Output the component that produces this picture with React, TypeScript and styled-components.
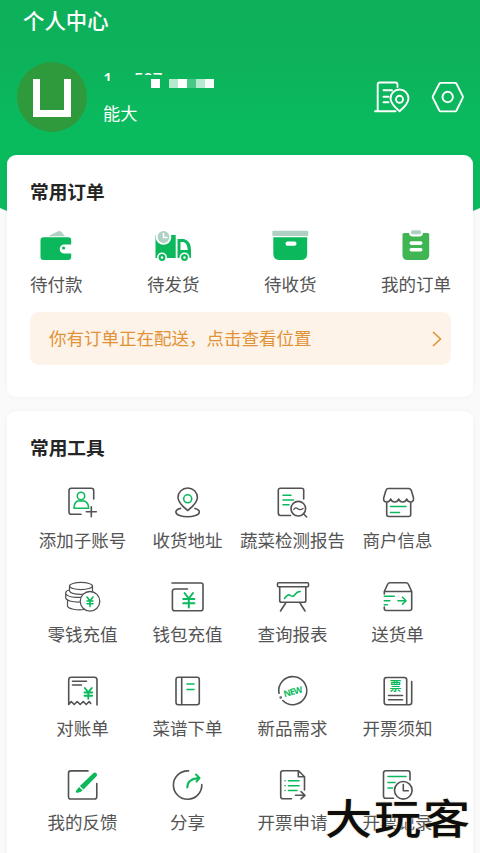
import React from "react";
import styled, { createGlobalStyle } from "styled-components";

const GREEN = "#0bb95c";
const INK = "#525252";

const GlobalStyle = createGlobalStyle`
  * { box-sizing: border-box; }
  html, body { margin: 0; padding: 0; }
  body {
    background: #fafafa;
    font-family: "Noto Sans CJK SC", "Noto Sans", sans-serif;
    overflow: hidden;
  }
`;

const Page = styled.div`
  position: relative;
  width: 480px;
  height: 853px;
  overflow: hidden;
  background: #fafafa;
`;

const Header = styled.header`
  height: 230px;
  margin-bottom: -75px;
  padding: 5px 12px 0 17px;
  color: #fff;
  background: linear-gradient(#0eb05a 0, #0db25b 60px, #0abb5e 130px, #0abb5e 100%);
  clip-path: polygon(0 0, 480px 0, 480px 208px, 473px 211px, 430px 229px, 50px 229px, 7px 211px, 0 208px);
`;

const PageTitle = styled.h1`
  margin: 0 0 0 6px;
  font-size: 21.4px;
  line-height: 30px;
  font-weight: 500;
`;

const Profile = styled.div`
  display: flex;
  align-items: flex-start;
  margin-top: 27px;
`;

const Avatar = styled.div`
  display: flex;
  width: 70px;
  height: 70px;
  padding: 17px 16px 15px;
  border-radius: 50%;
  background: #2e9a3b;
`;

const AvatarMark = styled.div`
  flex: 1;
  border: 7px solid #fff;
  border-top: 0;
`;

const User = styled.div`
  flex: 1;
  padding: 10px 0 0 16px;
`;

const Phone = styled.div`
  display: flex;
  align-items: flex-start;
  height: 29px;
  font-size: 17px;
`;

const DigitSlice = styled.span<{ $w: number; $h: number }>`
  width: ${(p) => p.$w}px;
  height: ${(p) => p.$h}px;
  margin-right: ${(p) => (p.$w < 20 ? 21 : 0)}px;
  overflow: hidden;
  line-height: 14px;
  font-family: "Noto Sans", sans-serif;
  font-weight: 500;
  letter-spacing: -0.4px;
`;

const Mosaic = styled.span`
  display: flex;
  margin: 7px 0 0 -12px;
`;

const Tile = styled.i<{ $a: number; $gap?: number }>`
  width: 9px;
  height: 9px;
  margin-right: ${(p) => p.$gap || 0}px;
  background: rgba(255, 255, 255, ${(p) => p.$a});
`;

const Nick = styled.div`
  font-size: 17.2px;
  line-height: 24px;
`;

const HeaderActions = styled.div`
  display: flex;
  gap: 16px;
  padding-top: 17px;
`;

const Card = styled.section<{ $h: number }>`
  position: relative;
  height: ${(p) => p.$h}px;
  margin: 0 7px 14px;
  padding: 22px 22px 0 23px;
  background: #fff;
  border-radius: 9px;
  box-shadow: 0 0 7px rgba(0, 0, 0, 0.035);
`;

const CardTitle = styled.h2`
  margin: 0;
  font-size: 18.7px;
  line-height: 28px;
  font-weight: 700;
  color: #252525;
`;

const Orders = styled.div`
  display: flex;
  justify-content: space-between;
  margin-top: 23px;
`;

const Entry = styled.div`
  display: flex;
  flex-direction: column;
  align-items: center;
`;

const Label = styled.span`
  margin-top: 8px;
  font-size: 17.5px;
  line-height: 24px;
  white-space: nowrap;
  color: #545454;
`;

const Notice = styled.div`
  display: flex;
  align-items: center;
  justify-content: space-between;
  height: 53px;
  margin-top: 16px;
  padding: 0 8px 2px 19px;
  border-radius: 9px;
  background: #fdf3e9;
  font-size: 17.5px;
  color: #e29236;
`;

const Tools = styled.div`
  display: grid;
  grid-template-columns: repeat(4, 105px);
  grid-auto-rows: 94px;
  margin-top: 23px;
`;

const Drawing = styled.svg`
  display: block;
  width: 40px;
  height: 36px;
  fill: none;
  stroke: ${INK};
  stroke-width: 1.6;
  stroke-linecap: round;
  stroke-linejoin: round;
  .g { stroke: ${GREEN}; }
  .f { fill: ${GREEN}; stroke: none; }
  .m { fill: #afd0c2; stroke: none; }
  .w { fill: #fff; stroke: none; }
  .o { stroke: #fff; stroke-width: 1.9; }
  text { fill: ${GREEN}; stroke: none; }
`;

const Chevron = styled.svg`
  width: 12px;
  height: 18px;
  margin-top: 2px;
  fill: none;
  stroke: #e29236;
  stroke-width: 1.6;
`;

const Watermark = styled.div`
  position: absolute;
  left: 325px;
  top: 786px;
  font-size: 47px;
  line-height: 60px;
  letter-spacing: 2px;
  color: #0d0d0d;
  font-weight: 500;
  white-space: nowrap;
  transform: scaleY(0.88);
  text-shadow: 0 0 2px #e9dfc0, 0 0 2px #e9dfc0;
`;

type Item = { label: string; art: React.ReactNode };

const orders: Item[] = [
  {
    label: "待付款",
    art: (
      <>
        <path className="m" d="M12 8.3 21.5 3.6Q24 2 25.6 4.2L29 8.3Z" />
        <path className="f" d="M7.5 9.3h24.7q3 0 3 3v4.2h-7a4.5 4.5 0 0 0 0 9h7V29q0 3-3 3H7.5q-3 0-3-3V12.3q0-3 3-3Z" />
        <circle className="f" cx="27.6" cy="20" r="1.6" />
      </>
    ),
  },
  {
    label: "待发货",
    art: (
      <>
        <path className="f" d="M2.5 8q0-1 1-1H22.7V30H2.5ZM24.5 11h6.5q7 2 7 11v8H24.5Z" />
        <path className="w" d="M27.5 14h3q4 1.500 4.300 8h-7.300Z" />
        <circle className="w" cx="10.5" cy="9" r="7.8" />
        <circle className="m" cx="10.5" cy="9" r="5.9" />
        <path d="M10.5 5.500v4h3.500" stroke="#fff" />
        <circle className="w" cx="9" cy="29.5" r="5" />
        <circle className="f" cx="9" cy="29.5" r="3.4" />
        <circle className="w" cx="31.5" cy="29.5" r="5" />
        <circle className="f" cx="31.5" cy="29.5" r="3.4" />
        <circle className="w" cx="9" cy="29.5" r="1.2" />
        <circle className="w" cx="31.5" cy="29.5" r="1.2" />
      </>
    ),
  },
  {
    label: "待收货",
    art: (
      <>
        <rect className="m" x="2.3" y="2.8" width="36" height="5.2" rx="1" />
        <path className="f" d="M3.300 9.300h33.900v16.200q0 6.500-6.500 6.500H9.800q-6.500 0-6.500-6.500Z" />
        <rect className="w" x="15.500" y="13.500" width="11" height="4.200" rx="2" />
      </>
    ),
  },
  {
    label: "我的订单",
    art: (
      <>
        <path d="M8 5h23.700q1.500 0 1.500 1.500v20.500q0 5-5 5H11.500q-5 0-5-5V6.500Q6.500 5 8 5Z" fill="#3fb653" stroke="none" />
        <path className="w" d="M13 4.500h14q0 4-3.500 4h-7q-3.500 0-3.500-4Z" />
        <rect className="m" x="15" y="2.200" width="10" height="4" rx="1.500" />
        <rect className="w" x="13.500" y="13.300" width="13" height="3.600" rx="1.800" />
        <rect className="w" x="13.500" y="19.900" width="13" height="3.600" rx="1.800" />
      </>
    ),
  },
];

const tools: Item[] = [
  {
    label: "添加子账号",
    art: (
      <>
        <path d="M30.700 15V6.500q0-2.300-2.300-2.300H8.300Q6 4.200 6 6.500V28q0 2.300 2.300 2.300H18M28.300 22.700v10M23.300 27.700h10" />
        <circle className="g" cx="18" cy="12" r="3.700" />
        <path className="g" d="M14.500 17h7q4 1.500 4.200 7.300H11Q11.200 18.500 14.500 17Z" />
      </>
    ),
  },
  {
    label: "收货地址",
    art: (
      <>
        <path d="M19.700 26.500Q10 19 10 13.500a9.700 9.500 0 0 1 19.400 0Q29.400 19 19.700 26.500Z" />
        <circle className="g" cx="19.700" cy="14.800" r="4" />
        <path d="M12.500 24.400C6 26 7 30 11.500 31.500Q19.500 34 27.500 31.500C32.500 30 33 26 27 24.400" />
      </>
    ),
  },
  {
    label: "蔬菜检测报告",
    art: (
      <>
        <path d="M30.700 15V6.300Q30.700 4.200 28.500 4.200h-21Q5.300 4.200 5.300 6.300V29q0 2.500 2.300 2.500H17.500" />
        <path className="g" d="M10 11.300h8M10 16h10.500M10 20.700h6" />
        <circle cx="25.300" cy="24.700" r="7.300" />
        <path d="M30.700 30 33.700 33" />
        <path strokeWidth="1.200" d="M20.700 25.500q2-2.700 4-.8t5.500-.2" style={{}} />
      </>
    ),
  },
  {
    label: "商户信息",
    art: (
      <>
        <path d="M8.700 18V30.500q0 2 2 2h20q2 0 2-2V18M10 4.500h20.700q2 0 2.800 2.500l2 7q.3 4-2.800 4-3.200 0-4-3-1 3-4 3t-4-3q-1 3-4 3t-4-3q-1 3-4 3-3.500 0-3-4l2-7q.800-2.500 2.300-2.500Z" />
        <path className="g" d="M12.500 22.500h15.500M12.500 28.500h9" />
      </>
    ),
  },
  {
    label: "零钱充值",
    art: (
      <>
        <ellipse cx="18" cy="8" rx="11.500" ry="3.600" strokeWidth="1.200" />
        <path
          strokeWidth="1.200"
          d="M6.500 8v5c2 4.500 21 4.500 23 0V8M6 12q-3.500 1-3.300 3v5c1 3 8 4.300 14 4M3 16c3 4 16 4.500 19 1.500M4.500 22v6c1 3 9 4.500 17 3.500"
        />
        <circle className="w" cx="27" cy="23.300" r="10" />
        <circle cx="27" cy="23.300" r="9.800" strokeWidth="1.300" />
        <path className="g" d="m24 19 3 4 3-4M27 23v5.500M24 23h6M24 25.700h6" />
      </>
    ),
  },
  {
    label: "钱包充值",
    art: (
      <>
        <path d="M4 5h29q2 0 2 2v23.500q0 2.300-2.300 2.300h-26q-2.300 0-2.300-2.300V13.500Q4.400 11 7 11h12.500" />
        <path className="g" d="m16.500 15 4.300 5.500L25 15M20.800 20.500v9M15.200 21h11.200M15.200 25.200h11.200" strokeWidth="2" />
      </>
    ),
  },
  {
    label: "查询报表",
    art: (
      <>
        <rect x="4.500" y="4.700" width="31" height="4" rx="1" />
        <path d="M6.700 9v13.500q0 1.800 1.800 1.800H31q1.800 0 1.800-1.800V9M12.700 25 7.500 33M27 25l5 8" />
        <path className="g" d="M11.500 20.500q3.500-5 6-3t4.500-1 5.300-3" />
      </>
    ),
  },
  {
    label: "送货单",
    art: (
      <>
        <path d="M6.300 16v-2.500L9.500 6.500q.8-1.800 2.500-1.800h16q1.700 0 2.500 1.800l3.200 7v17q0 2-2 2H8.300q-2 0-2-2V29M6.300 13.500h27.400" />
        <path className="g" d="M6.300 18.300h10M6.300 22.700h5.500M6.300 26.700h3M20 22.700h7.500M24.500 19.200 28 22.700l-3.500 3.500" />
      </>
    ),
  },
  {
    label: "对账单",
    art: (
      <>
        <path d="M34 33V8q0-2.700-2.500-2.700H8.200Q5.700 5.300 5.700 8v24.500l2.500-3 3 3 3-3 3 3 3-3 3 3 3-3 1.500 2M9.500 9.200h14M9.500 13h9" />
        <path className="g" strokeWidth="1.900" d="m21.800 16 3.500 4.300 3.500-4.300M25.300 20.500v6.300M21.500 20.500h7.700M21.500 23.700h7.700" />
      </>
    ),
  },
  {
    label: "菜谱下单",
    art: (
      <>
        <rect x="8" y="5.200" width="23.300" height="27.500" rx="2.200" />
        <path d="M13.700 5.500v27" />
        <path className="g" d="M19 12h7M19 17.500h7" />
      </>
    ),
  },
  {
    label: "新品需求",
    art: (
      <>
        <path d="M6 21.300A14 14 0 1 1 9.800 28.500" />
        <circle cx="7.700" cy="25.500" r=".5" />
        <text x="20" y="22.800" textAnchor="middle" fontSize="9" fontWeight="700" fontFamily="Open Sans" transform="rotate(-15 20 19.500)" textLength="19.500">NEW</text>
      </>
    ),
  },
  {
    label: "开票须知",
    art: (
      <>
        <path d="M28.700 32.700V7.800q0-2.300-2.300-2.300H8.500Q6.200 5.500 6.200 7.800v22.500q0 2.400 2.400 2.400h22.700q2.400 0 2.400-2.400V9.500M10.500 23.500h14M10.500 27.800h14" />
        <text x="17.400" y="18.500" textAnchor="middle" fontSize="12" fontWeight="700">票</text>
      </>
    ),
  },
  {
    label: "我的反馈",
    art: (
      <>
        <path d="M25 4.900H7.800Q5.500 4.900 5.500 7.200v23.500Q5.500 33 7.800 33h23.500q2.500 0 2.500-2.300V17.500" />
        <path className="f" d="M30.500 7q1.500-1.300 3 .3 1.300 1.500 0 2.900L20.500 23.500 16.900 20ZM16 20.900l3.700 3.700q-2.500 2.400-5.700 2.100-1.800-.2-1-2Z" />
      </>
    ),
  },
  {
    label: "分享",
    art: (
      <>
        <path d="M20.500 4.900A14.200 14.200 0 1 0 33.800 18.500" />
        <path className="g" strokeWidth="2" d="M19.300 21.500q0-8.500 11.200-9.500M28 8.500l3.500 3.500-3 3.500" />
      </>
    ),
  },
  {
    label: "开票申请",
    art: (
      <>
        <path d="M31.500 24V10.700l-6-6H10Q7.700 4.700 7.700 7v23.500Q7.700 32.800 10 32.800h8.500M25.300 5v5.800h5.900M22.500 29.300H32M28 25.700l4 3.600-4 3.600" />
        <path className="g" d="M12 14.700h.1M15.500 14.700h10.500M12 19.700h.1M15.500 19.700h10.500M12 24.500h.1M15.500 24.500h8.500" />
      </>
    ),
  },
  {
    label: "开票记录",
    art: (
      <>
        <path d="M32 14V7q0-2.300-2.300-2.300H7.800Q5.500 4.700 5.500 7v23q0 2.300 2.300 2.300h7.700" />
        <path className="g" d="M10 10.500h18M10 16.500h7M10 22h4.500" />
        <circle cx="25.300" cy="24.300" r="8.800" />
        <path d="M25.300 18.500v6.300h5" />
      </>
    ),
  },
];

function IconEntry({ label, art }: Item) {
  return (
    <Entry>
      <Drawing viewBox="0 0 40 36">{art}</Drawing>
      <Label>{label}</Label>
    </Entry>
  );
}

export default function App() {
  return (
    <Page>
      <GlobalStyle />
      <Header>
        <PageTitle>个人中心</PageTitle>
        <Profile>
          <Avatar>
            <AvatarMark />
          </Avatar>
          <User>
            <Phone>
              <DigitSlice $w={10} $h={9}>1</DigitSlice>
              <DigitSlice $w={29} $h={3}>507</DigitSlice>
              <Mosaic>
                <Tile $a={1} $gap={9} />
                <Tile $a={0.7} />
                <Tile $a={1} />
                <Tile $a={0.25} />
                <Tile $a={0.7} />
                <Tile $a={0.96} />
              </Mosaic>
            </Phone>
            <Nick>能大</Nick>
          </User>
          <HeaderActions>
            <Drawing viewBox="0 0 40 36">
              <g className="o">
                <path d="M25.500 8V5.500q0-2-2-2H7.700q-2 0-2 2v26.800M3 32.300h20.500M11.500 11.300H20M11.500 17.700h5M11.500 23.300h5" />
                <path d="M27.600 32.300Q18.500 24.500 18.500 19.500a9 9 0 0 1 18 0Q36.500 24.500 27.600 32.300Z" />
                <circle cx="27.500" cy="20.300" r="3.500" />
              </g>
            </Drawing>
            <Drawing viewBox="0 0 40 36">
              <g className="o">
                <path d="M12.800 3.900h14.200q1 0 1.500.9l6.200 12.300q.4.900 0 1.800l-6.200 12.600q-.5.900-1.500.9H12.800q-1 0-1.500-.9L4.900 18.900q-.4-.9 0-1.800L11.300 4.800q.5-.9 1.500-.9Z" />
                <circle cx="19.700" cy="18" r="5.200" />
              </g>
            </Drawing>
          </HeaderActions>
        </Profile>
      </Header>

      <Card $h={242}>
        <CardTitle>常用订单</CardTitle>
        <Orders>
          {orders.map((o) => (
            <IconEntry key={o.label} {...o} />
          ))}
        </Orders>
        <Notice>
          你有订单正在配送，点击查看位置
          <Chevron viewBox="0 0 12 18">
            <path d="M2 2l7.500 7L2 16" />
          </Chevron>
        </Notice>
      </Card>

      <Card $h={460}>
        <CardTitle>常用工具</CardTitle>
        <Tools>
          {tools.map((t) => (
            <IconEntry key={t.label} {...t} />
          ))}
        </Tools>
      </Card>

      <Watermark>大玩客</Watermark>
    </Page>
  );
}
